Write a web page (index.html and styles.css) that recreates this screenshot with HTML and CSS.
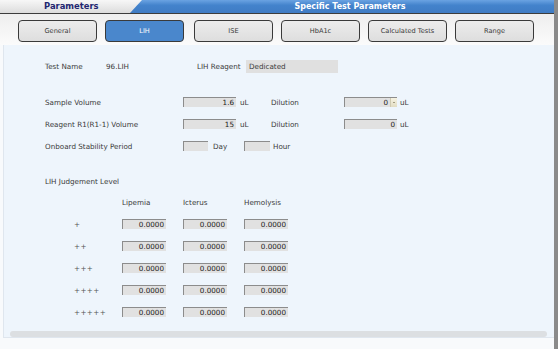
FILE: index.html
```html
<!DOCTYPE html>
<html lang="en">

    <head>
        <meta charset="UTF-8">
        <meta name="viewport" content="width=device-width, initial-scale=1.0">
        <title>Specific Test Parameters</title>
        <link rel="stylesheet" href="styles.css">
    </head>

    <body>
        <div class="app">
            <header class="titlebar">
                <div class="title-left">Parameters</div>
                <div class="title-right">Specific Test Parameters</div>
            </header>

            <nav class="tabs">
                <button class="tab">General</button>
                <button class="tab active">LIH</button>
                <button class="tab">ISE</button>
                <button class="tab">HbA1c</button>
                <button class="tab">Calculated Tests</button>
                <button class="tab">Range</button>
            </nav>

            <main class="panel">
                <div class="form">
                    <div class="row row-top">
                        <span class="cell w-name">Test Name</span>
                        <span class="cell w-test">96.LIH</span>
                        <span class="cell w-reagent">LIH Reagent</span>
                        <span class="flat-box">Dedicated</span>
                    </div>

                    <div class="volumes">
                        <div class="row">
                            <span class="cell w-label">Sample Volume</span>
                            <span class="field w-vol">1.6</span>
                            <span class="cell w-unit">uL</span>
                            <span class="cell w-dil">Dilution</span>
                            <span class="field w-vol spin">0<i class="spinner"></i></span>
                            <span class="cell unit-after">uL</span>
                        </div>
                        <div class="row">
                            <span class="cell w-label">Reagent R1(R1-1) Volume</span>
                            <span class="field w-vol">15</span>
                            <span class="cell w-unit">uL</span>
                            <span class="cell w-dil">Dilution</span>
                            <span class="field w-vol">0</span>
                            <span class="cell unit-after">uL</span>
                        </div>
                        <div class="row">
                            <span class="cell w-label">Onboard Stability Period</span>
                            <span class="field w-day"></span>
                            <span class="cell w-dayunit">Day</span>
                            <span class="field w-hour"></span>
                            <span class="cell unit-after">Hour</span>
                        </div>
                    </div>

                    <div class="judge">
                        <div class="judge-title">LIH Judgement Level</div>
                        <div class="judge-row judge-head">
                            <span class="level"></span>
                            <span class="col">Lipemia</span>
                            <span class="col">Icterus</span>
                            <span class="col">Hemolysis</span>
                        </div>
                        <div class="judge-row">
                            <span class="level">+</span>
                            <span class="field col">0.0000</span>
                            <span class="field col">0.0000</span>
                            <span class="field col">0.0000</span>
                        </div>
                        <div class="judge-row">
                            <span class="level">++</span>
                            <span class="field col">0.0000</span>
                            <span class="field col">0.0000</span>
                            <span class="field col">0.0000</span>
                        </div>
                        <div class="judge-row">
                            <span class="level">+++</span>
                            <span class="field col">0.0000</span>
                            <span class="field col">0.0000</span>
                            <span class="field col">0.0000</span>
                        </div>
                        <div class="judge-row">
                            <span class="level">++++</span>
                            <span class="field col">0.0000</span>
                            <span class="field col">0.0000</span>
                            <span class="field col">0.0000</span>
                        </div>
                        <div class="judge-row">
                            <span class="level">+++++</span>
                            <span class="field col">0.0000</span>
                            <span class="field col">0.0000</span>
                            <span class="field col">0.0000</span>
                        </div>
                    </div>
                </div>

                <div class="hbar"></div>
            </main>
        </div>
    </body>

</html>
```

FILE: styles.css
```css
body {
    margin: 0;
    padding: 0;
    background-color: #f8fafc;
    font-family: "DejaVu Sans", Verdana, sans-serif;
    font-size: 7.2px;
    color: #3a3a3a;
}

.app {
    width: 558px;
    height: 349px;
    box-sizing: border-box;
    border-right: 4px solid #8a8a8a;
    display: flex;
    flex-direction: column;
}

/* title bar */
.titlebar {
    display: flex;
    height: 13px;
    border-bottom: 1px solid #3c3c3c;
}

.title-left {
    width: 142px;
    flex-shrink: 0;
    box-sizing: border-box;
    padding-left: 44px;
    background: linear-gradient(#f7f7f7, #dcdcdc);
    color: #1e2670;
    font-weight: bold;
    font-size: 8.4px;
    line-height: 13px;
}

.title-right {
    flex: 1;
    margin-left: -12px;
    padding-left: 16px;
    clip-path: polygon(12px 0, 100% 0, 100% 100%, 0 100%);
    background: linear-gradient(#6aa3e2, #4383cc 40%, #3f7cc4);
    color: #ffffff;
    font-weight: bold;
    font-size: 8px;
    line-height: 13px;
    text-align: center;
}

/* tabs */
.tabs {
    display: flex;
    gap: 8px;
    height: 32px;
    box-sizing: border-box;
    padding: 6px 0 0 18px;
    background: linear-gradient(#eeeeee, #fbfbfb);
}

.tab {
    width: 79px;
    height: 22px;
    padding: 0;
    border: 1px solid #3a3a3a;
    border-radius: 4px;
    background: linear-gradient(#ececec, #dedede);
    font-family: inherit;
    font-size: 6.6px;
    color: #3a3a3a;
}

.tab.active {
    background: #4a87cc;
    color: #ffffff;
}

.tab:nth-child(3) {
    margin-left: 2px;
}

/* content panel */
.panel {
    flex: 1;
    margin: 0 0 11px 3px;
    background-color: #eef5fc;
    border-left: 1px solid #dfe6ee;
    border-bottom: 1px solid #dfe6ee;
    display: flex;
    flex-direction: column;
}

.form {
    padding: 15px 0 0 41px;
}

.row {
    display: flex;
    align-items: center;
    height: 10px;
}

.row-top {
    height: 13px;
}

.cell {
    flex-shrink: 0;
    white-space: nowrap;
}

.w-name { width: 61px; }
.w-test { width: 91px; }
.w-reagent { width: 49px; }
.w-label { width: 138px; }
.w-unit { width: 31px; padding-left: 4px; }
.w-dil { width: 73px; }
.w-dayunit { width: 31px; padding-left: 5px; }
.unit-after { padding-left: 3px; }

.flat-box {
    width: 92px;
    height: 13px;
    line-height: 13px;
    padding-left: 3px;
    box-sizing: border-box;
    background-color: #e0e0e0;
}

.field {
    height: 10px;
    box-sizing: border-box;
    flex-shrink: 0;
    background-color: #e1e1e1;
    border-top: 1px solid #8c8c8c;
    border-left: 1px solid #8c8c8c;
    text-align: right;
    padding-right: 2px;
    line-height: 9px;
    color: #222222;
}

.w-vol { width: 53px; }
.w-day { width: 25px; }
.w-hour { width: 26px; }

.spin {
    display: flex;
    justify-content: flex-end;
    padding-right: 0;
}

.spinner {
    position: relative;
    width: 7px;
    height: 9px;
    margin-left: 2px;
    background: linear-gradient(#f6f3e2, #e2dcc2);
    border-left: 1px solid #cfcab0;
    box-sizing: border-box;
}

.spinner::after {
    content: "";
    position: absolute;
    left: 2px;
    top: 4px;
    width: 2px;
    height: 1px;
    background-color: #a09a80;
}

.volumes {
    margin-top: 24px;
    display: flex;
    flex-direction: column;
    gap: 12px;
}

/* judgement table */
.judge {
    margin-top: 26px;
}

.judge-title {
    height: 10px;
    line-height: 10px;
}

.judge-row {
    display: flex;
    align-items: center;
    gap: 17px;
    height: 10px;
    margin-top: 12px;
}

.judge-head {
    margin-top: 10px;
}

.level {
    width: 48px;
    flex-shrink: 0;
    margin-left: 29px;
    margin-right: -17px;
    letter-spacing: 0.4px;
    color: #555555;
}

.col {
    width: 44px;
    flex-shrink: 0;
}

.hbar {
    height: 6px;
    margin: 14px 7px 0 6px;
    border-radius: 3px;
    background-color: #dcdfe2;
}
```
